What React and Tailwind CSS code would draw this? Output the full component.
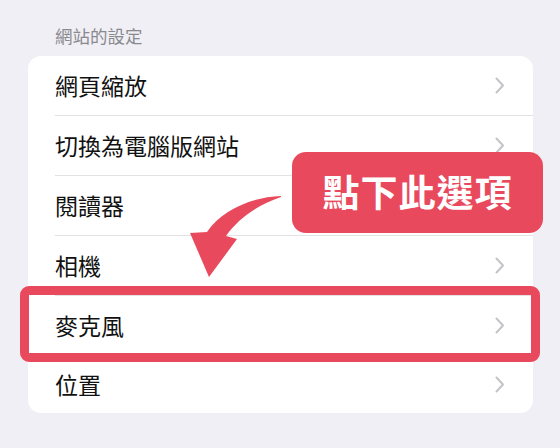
import React from "react";

const rows = ["網頁縮放", "切換為電腦版網站", "閱讀器", "相機", "麥克風", "位置"];

function Chevron() {
  return (
    <svg width="10" height="17" viewBox="0 0 10 17" className="shrink-0">
      <path d="M1.5 1.5 L8 8.5 L1.5 15.5" fill="none" stroke="#c4c4c8" strokeWidth="2" strokeLinecap="round" strokeLinejoin="round" />
    </svg>
  );
}

export default function App() {
  return (
    <div
      className="relative w-[560px] h-[448px] overflow-hidden bg-[#f0eff5]"
      style={{ fontFamily: '"Noto Sans CJK TC", "Noto Sans", sans-serif' }}
    >
      <div className="pt-[24px] pl-[55px] text-[17.5px] leading-[24px] text-[#8a8a8e]">網站的設定</div>
      <div className="mt-[8px] ml-[28px] w-[505px] h-[357px] bg-white rounded-[13px] overflow-hidden">
        {rows.map((r, i) => (
          <div key={r} className="pl-[27px]">
            <div
              className={
                "flex items-center justify-between pr-[28px] " +
                (i < rows.length - 1 ? "h-[60px] border-b border-[#e2e2e5]" : "h-[57px]")
              }
            >
              <span className="text-[23px] text-[#111111] leading-none">{r}</span>
              <Chevron />
            </div>
          </div>
        ))}
      </div>

      {/* highlight box */}
      <div className="absolute left-[20px] top-[286px] w-[520px] h-[76px] border-[9px] border-[#e9495d] rounded-[9px]" />

      {/* callout */}
      <div className="absolute left-[292px] top-[152px] w-[251px] h-[81px] rounded-[14px] bg-[#e9495d] flex items-center justify-center">
        <span className="text-white font-bold text-[37px] leading-none tracking-[1px] pb-[3px]">點下此選項</span>
      </div>

      {/* arrow */}
      <svg className="absolute left-0 top-0" width="560" height="448" viewBox="0 0 560 448">
        <path
          d="M281 196 C252 197 222 210 207 232 L190 233 L209 277 L237 239 L226 236 C238 219 257 205 281 197 Z"
          fill="#e9495d"
        />
      </svg>
    </div>
  );
}
